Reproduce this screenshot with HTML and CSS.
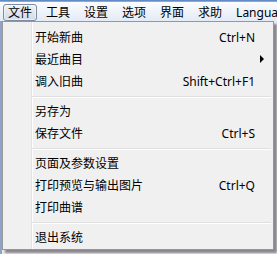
FILE: index.html
```html
<!DOCTYPE html>
<html lang="zh-CN">
<head>
    <meta charset="UTF-8">
    <meta name="viewport" content="width=device-width, initial-scale=1.0">
    <title>文件菜单</title>
    <link rel="stylesheet" href="styles.css">
</head>
<body>
    <!-- 窗口顶边 -->
    <div class="frame-edge"></div>

    <!-- 主菜单栏 -->
    <div class="menubar">
        <span class="menubar-item active">文件</span>
        <span class="menubar-item">工具</span>
        <span class="menubar-item">设置</span>
        <span class="menubar-item">选项</span>
        <span class="menubar-item">界面</span>
        <span class="menubar-item">求助</span>
        <span class="menubar-item">Language</span>
    </div>

    <!-- 文件下拉菜单 -->
    <div class="desk">
        <div class="dropdown">
            <div class="menu-item"><span class="label">开始新曲</span><span class="shortcut">Ctrl+N</span></div>
            <div class="menu-item"><span class="label">最近曲目</span><span class="shortcut"></span><span class="arrow"></span></div>
            <div class="menu-item"><span class="label">调入旧曲</span><span class="shortcut">Shift+Ctrl+F1</span></div>
            <div class="sep"></div>
            <div class="menu-item"><span class="label">另存为</span></div>
            <div class="menu-item"><span class="label">保存文件</span><span class="shortcut">Ctrl+S</span></div>
            <div class="sep"></div>
            <div class="menu-item"><span class="label">页面及参数设置</span></div>
            <div class="menu-item"><span class="label">打印预览与输出图片</span><span class="shortcut">Ctrl+Q</span></div>
            <div class="menu-item"><span class="label">打印曲谱</span></div>
            <div class="sep"></div>
            <div class="menu-item"><span class="label">退出系统</span></div>
        </div>
    </div>
</body>
</html>
```

FILE: styles.css
```css
body {
    font-family: "Noto Sans", "Noto Sans CJK SC", sans-serif;
    font-size: 12px;
    color: #000;
    background-color: #ece8f1;
    margin: 0;
    width: 277px;
    height: 254px;
    overflow: hidden;
}

.frame-edge {
    height: 2px;
    background: linear-gradient(#4f7bbd, #9db8e0);
}

.menubar {
    height: 19px;
    display: flex;
    padding-left: 1px;
    background: linear-gradient(#fbfcfe, #e3ebf6);
    white-space: nowrap;
}

.menubar-item {
    height: 15px;
    line-height: 15px;
    margin: 2px 2px 0;
    padding: 0 4px;
    border: 1px solid transparent;
    border-radius: 3px;
}

.menubar-item.active {
    border-color: #7d8ba0;
    background: linear-gradient(#eef2f7, #d3dbe6);
    box-shadow: inset 0 0 0 1px rgba(255, 255, 255, 0.5);
}

.desk {
    height: 233px;
    background: linear-gradient(to right, #8fa3c8 0 2px, transparent 2px);
}

.dropdown {
    width: 270px;
    margin-left: 2px;
    padding: 4px 0 1px;
    border: 1px solid #979797;
    background:
        linear-gradient(to right, transparent 28px, #e2e3e3 28px 29px, #fff 29px 30px, transparent 30px),
        #f0f0f0;
    box-shadow: 3px 3px 2px rgba(0, 0, 0, 0.42);
}

.menu-item {
    height: 22px;
    display: grid;
    grid-template-columns: 1fr auto 18px;
    align-items: center;
    padding-left: 32px;
    white-space: nowrap;
}

.shortcut {
    text-align: right;
}

.arrow {
    width: 0;
    height: 0;
    margin-left: 5px;
    border-top: 4px solid transparent;
    border-bottom: 4px solid transparent;
    border-left: 4px solid #000;
}

.sep {
    height: 2px;
    margin: 4px 2px 2px 29px;
    border-top: 1px solid #e0e0e0;
    background-color: #fff;
    height: 1px;
}
```
